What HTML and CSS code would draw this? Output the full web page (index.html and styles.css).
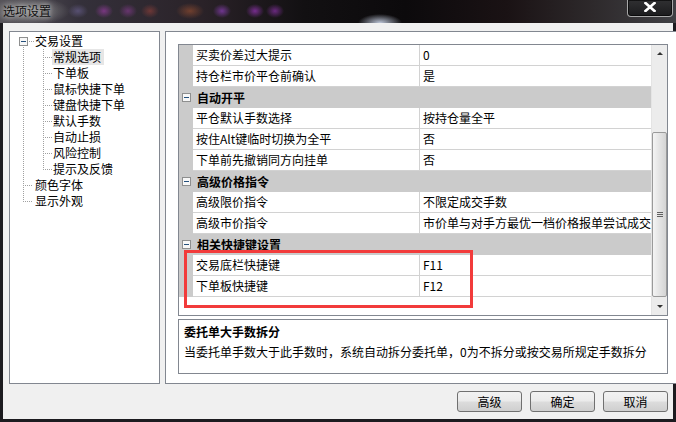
FILE: index.html
```html
<!DOCTYPE html>
<html lang="zh-CN">
<head>
<meta charset="utf-8">
<title>选项设置</title>
<link rel="stylesheet" href="styles.css">
</head>
<body>
<div class="window">
  <div class="titlebar">
    <span class="title">选项设置</span>
    <button class="close" aria-label="关闭"><svg width="12" height="10" viewBox="0 0 12 10"><path d="M1.5 1l9 8M10.5 1l-9 8" stroke="#fff" stroke-width="2.6" stroke-linecap="square"/></svg></button>
  </div>
  <div class="dialog">
    <div class="main">
      <div class="tree-panel">
        <div class="tree">
          <div class="trow root"><svg class="toggle" width="9" height="9" viewBox="0 0 9 9"><rect x="0.5" y="0.5" width="8" height="8" fill="#f7f7f7" stroke="#8e8f8f"/><path d="M2 4.5h5" stroke="#24507c"/></svg><span class="label">交易设置</span></div>
          <div class="trow child"><span class="label sel">常规选项</span></div>
          <div class="trow child"><span class="label">下单板</span></div>
          <div class="trow child"><span class="label">鼠标快捷下单</span></div>
          <div class="trow child"><span class="label">键盘快捷下单</span></div>
          <div class="trow child"><span class="label">默认手数</span></div>
          <div class="trow child"><span class="label">自动止损</span></div>
          <div class="trow child"><span class="label">风险控制</span></div>
          <div class="trow child last"><span class="label">提示及反馈</span></div>
          <div class="trow top"><span class="label">颜色字体</span></div>
          <div class="trow top last"><span class="label">显示外观</span></div>
        </div>
      </div>
      <div class="right-panel">
        <div class="grid">
          <div class="rows">
            <div class="prow"><span class="gut"></span><span class="name">买卖价差过大提示</span><span class="val">0</span></div>
            <div class="prow"><span class="gut"></span><span class="name">持仓栏市价平仓前确认</span><span class="val">是</span></div>
            <div class="group"><svg class="toggle" width="9" height="9" viewBox="0 0 9 9"><rect x="0.5" y="0.5" width="8" height="8" fill="#f7f7f7" stroke="#8e8f8f"/><path d="M2 4.5h5" stroke="#24507c"/></svg><span>自动开平</span></div>
            <div class="prow"><span class="gut"></span><span class="name">平仓默认手数选择</span><span class="val">按持仓量全平</span></div>
            <div class="prow"><span class="gut"></span><span class="name">按住Alt键临时切换为全平</span><span class="val">否</span></div>
            <div class="prow"><span class="gut"></span><span class="name">下单前先撤销同方向挂单</span><span class="val">否</span></div>
            <div class="group"><svg class="toggle" width="9" height="9" viewBox="0 0 9 9"><rect x="0.5" y="0.5" width="8" height="8" fill="#f7f7f7" stroke="#8e8f8f"/><path d="M2 4.5h5" stroke="#24507c"/></svg><span>高级价格指令</span></div>
            <div class="prow"><span class="gut"></span><span class="name">高级限价指令</span><span class="val">不限定成交手数</span></div>
            <div class="prow"><span class="gut"></span><span class="name">高级市价指令</span><span class="val">市价单与对手方最优一档价格报单尝试成交</span></div>
            <div class="group"><svg class="toggle" width="9" height="9" viewBox="0 0 9 9"><rect x="0.5" y="0.5" width="8" height="8" fill="#f7f7f7" stroke="#8e8f8f"/><path d="M2 4.5h5" stroke="#24507c"/></svg><span>相关快捷键设置</span></div>
            <div class="prow"><span class="gut"></span><span class="name">交易底栏快捷键</span><span class="val">F11</span></div>
            <div class="prow"><span class="gut"></span><span class="name">下单板快捷键</span><span class="val">F12</span></div>
          </div>
          <div class="scrollbar">
            <div class="sb-btn"><span class="arrow up"></span></div>
            <div class="thumb" style="margin-top:70px;height:165px"><span class="grip"></span></div>
            <div class="sb-fill"></div>
            <div class="sb-btn"><span class="arrow down"></span></div>
          </div>
          <div class="highlight"></div>
        </div>
        <div class="desc">
          <div class="desc-title">委托单大手数拆分</div>
          <div class="desc-text">当委托单手数大于此手数时，系统自动拆分委托单，0为不拆分或按交易所规定手数拆分</div>
        </div>
      </div>
    </div>
    <div class="buttons">
      <button class="btn">高级</button>
      <button class="btn">确定</button>
      <button class="btn">取消</button>
    </div>
  </div>
</div>
</body>
</html>
```
FILE: styles.css
```css
* { box-sizing: border-box; }
html, body { margin: 0; padding: 0; }
body {
  width: 676px;
  height: 422px;
  overflow: hidden;
  background: #1c1b1f;
  font-family: "Noto Sans CJK SC", "Microsoft YaHei", sans-serif;
  font-size: 12px;
  color: #000;
}
.window {
  display: flex;
  flex-direction: column;
  height: 422px;
}
.titlebar {
  height: 23px;
  flex: none;
  display: flex;
  justify-content: space-between;
  align-items: flex-start;
  padding-left: 3px;
  background:
    radial-gradient(ellipse 40px 14px at 30px 11px, rgba(150,150,150,0.85), rgba(150,150,150,0) 100%),
    radial-gradient(ellipse 10px 7px at 78px 11px, rgba(110,100,150,0.6), rgba(0,0,0,0)),
    radial-gradient(ellipse 9px 7px at 104px 11px, rgba(150,60,160,0.7), rgba(0,0,0,0)),
    radial-gradient(ellipse 9px 7px at 128px 11px, rgba(140,60,150,0.6), rgba(0,0,0,0)),
    radial-gradient(ellipse 9px 7px at 150px 11px, rgba(170,70,60,0.5), rgba(0,0,0,0)),
    radial-gradient(ellipse 9px 7px at 222px 11px, rgba(130,60,170,0.8), rgba(0,0,0,0)),
    radial-gradient(ellipse 9px 7px at 255px 11px, rgba(140,50,170,0.8), rgba(0,0,0,0)),
    radial-gradient(ellipse 9px 7px at 275px 11px, rgba(140,50,170,0.7), rgba(0,0,0,0)),
    radial-gradient(ellipse 14px 8px at 190px 11px, rgba(180,90,50,0.5), rgba(0,0,0,0)),
    radial-gradient(ellipse 22px 9px at 380px 23px, rgba(210,220,240,0.9), rgba(0,0,0,0)),
    linear-gradient(to right, #57545a 0%, #34303a 12%, #2a2228 30%, #121012 45%, #0c0a0c 60%, #1a1214 75%, #2e2a2c 88%, #404044 100%);
}
.title {
  line-height: 21px;
  color: #111;
  text-shadow: 0 0 4px #c8c8c8, 0 0 8px #aaaaaa;
}
.close {
  width: 46px;
  height: 17px;
  margin-right: 3px;
  padding: 0 0 3px;
  border: 1px solid rgba(200,200,200,0.8);
  border-top: none;
  border-radius: 0 0 4px 4px;
  background: linear-gradient(#303032, #1b1b1d);
  display: flex;
  align-items: center;
  justify-content: center;
  box-shadow: inset 0 0 0 1px rgba(0,0,0,0.6);
}
.dialog {
  flex: 1;
  margin: 0 3px 3px;
  background: #f0f0f0;
  padding: 8px 5px 0 6px;
  display: flex;
  flex-direction: column;
}
.main {
  display: flex;
  gap: 5px;
  height: 353px;
  flex: none;
}
.tree-panel {
  width: 151px;
  flex: none;
  border: 1px solid #828790;
  background: #fff;
}
.tree { padding-top: 1px; }
.trow {
  height: 16px;
  line-height: 16px;
  display: flex;
  align-items: center;
  white-space: nowrap;
  background-repeat: no-repeat;
}
.label { padding: 0 3px 0 1px; height: 16px; }
.label.sel { background: #e6e6e6; }
.root {
  padding-left: 9px;
  background-image:
    repeating-linear-gradient(to bottom, #a0a0a0 0 1px, transparent 1px 2px),
    repeating-linear-gradient(to right, #a0a0a0 0 1px, transparent 1px 2px);
  background-position: 13px 12px, 19px 8px;
  background-size: 1px 4px, 6px 1px;
}
.root .label { margin-left: 6px; }
.toggle { flex: none; display: block; }
.child {
  padding-left: 42px;
  background-image:
    repeating-linear-gradient(to bottom, #a0a0a0 0 1px, transparent 1px 2px),
    repeating-linear-gradient(to bottom, #a0a0a0 0 1px, transparent 1px 2px),
    repeating-linear-gradient(to right, #a0a0a0 0 1px, transparent 1px 2px);
  background-position: 13px 0, 33px 0, 35px 8px;
  background-size: 1px 16px, 1px 16px, 7px 1px;
}
.child.last { background-size: 1px 16px, 1px 9px, 7px 1px; }
.top {
  padding-left: 24px;
  background-image:
    repeating-linear-gradient(to bottom, #a0a0a0 0 1px, transparent 1px 2px),
    repeating-linear-gradient(to right, #a0a0a0 0 1px, transparent 1px 2px);
  background-position: 13px 0, 15px 8px;
  background-size: 1px 16px, 8px 1px;
}
.top.last { background-size: 1px 9px, 8px 1px; }

.right-panel {
  flex: 1;
  border: 1px solid #828790;
  background: #fff;
  padding: 12px 8px 9px 12px;
  display: flex;
  flex-direction: column;
  gap: 3px;
}
.grid {
  position: relative;
  height: 272px;
  flex: none;
  border: 1px solid #828790;
  display: flex;
  background: #fff;
}
.rows {
  flex: 1;
  min-width: 0;
  overflow: hidden;
}
.prow {
  display: flex;
  height: 21px;
}
.gut {
  width: 14px;
  flex: none;
  background: #cbcbcb;
}
.name {
  width: 227px;
  flex: none;
  border-right: 1px solid #d2d2d2;
  border-bottom: 1px solid #d2d2d2;
  padding-left: 3px;
  line-height: 20px;
  white-space: nowrap;
}
.val {
  flex: 1;
  min-width: 0;
  border-bottom: 1px solid #d2d2d2;
  padding-left: 3px;
  line-height: 20px;
  white-space: nowrap;
  overflow: hidden;
}
.group {
  height: 21px;
  background: #cbcbcb;
  display: flex;
  align-items: center;
  gap: 6px;
  padding-left: 3px;
  font-weight: bold;
}
.scrollbar {
  width: 16px;
  flex: none;
  display: flex;
  flex-direction: column;
  background: #ececec;
  border-left: 1px solid #e4e4e4;
}
.sb-btn {
  height: 17px;
  flex: none;
  display: flex;
  align-items: center;
  justify-content: center;
}
.arrow {
  width: 0;
  height: 0;
  border-left: 3px solid transparent;
  border-right: 3px solid transparent;
}
.arrow.up { border-bottom: 3px solid #333; }
.arrow.down { border-top: 3px solid #333; }
.thumb {
  flex: none;
  margin-left: 0;
  margin-right: 0;
  border: 1px solid #9a9a9a;
  border-radius: 2px;
  background: linear-gradient(to right, #f4f4f4, #e2e2e2 55%, #d4d4d4);
  display: flex;
  align-items: center;
  justify-content: center;
}
.grip {
  width: 6px;
  height: 5px;
  background: repeating-linear-gradient(to bottom, #606060 0 1px, transparent 1px 2px);
}
.sb-fill { flex: 1; }
.highlight {
  position: absolute;
  left: 5px;
  top: 205px;
  width: 289px;
  height: 58px;
  border: 3px solid #f23b3b;
}
.desc {
  height: 55px;
  flex: none;
  border: 1px solid #828790;
  background: #fff;
  padding: 4px 5px 0;
  line-height: 16px;
  white-space: nowrap;
}
.desc-title { font-weight: bold; }
.desc-text { margin-top: 4px; }
.buttons {
  display: flex;
  justify-content: flex-end;
  gap: 8px;
  margin-top: 7px;
}
.btn {
  width: 65px;
  height: 21px;
  padding: 0;
  border: 1px solid #707070;
  border-radius: 3px;
  background: linear-gradient(#f2f2f2 0%, #ebebeb 48%, #dcdcdc 52%, #cfcfcf 100%);
  font-family: "Noto Sans CJK SC", "Microsoft YaHei", sans-serif;
  font-size: 12px;
  color: #000;
  line-height: 19px;
}
```
